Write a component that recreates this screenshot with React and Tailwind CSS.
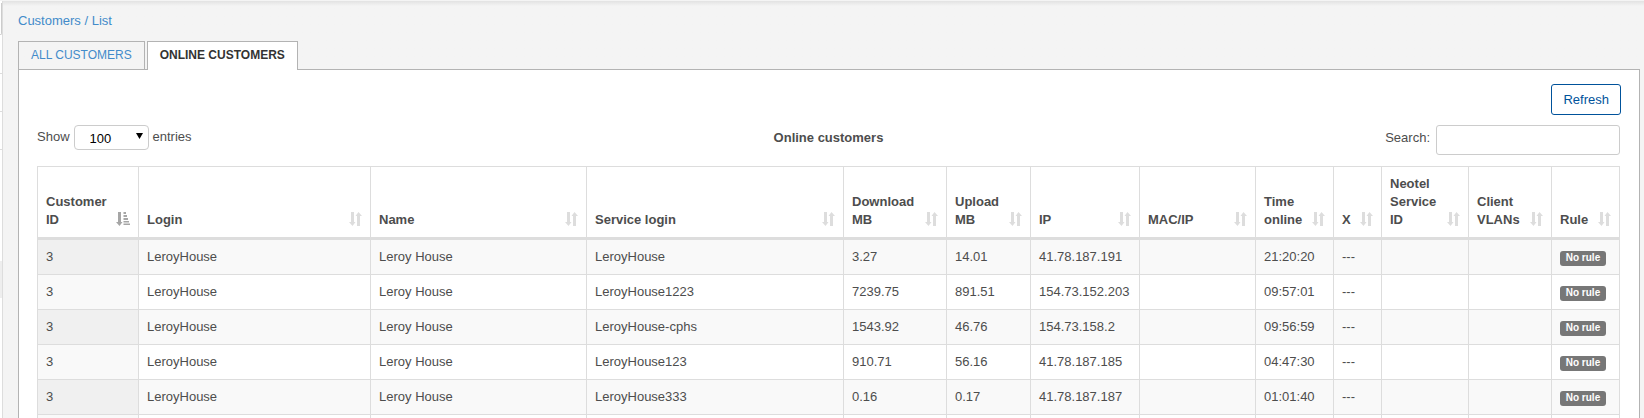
const columns = [
  { label: 'Customer ID', width: 'w-[101px]', sorted: true },
  { label: 'Login', width: 'w-[232px]' },
  { label: 'Name', width: 'w-[216px]' },
  { label: 'Service login', width: 'w-[257px]' },
  { label: 'Download MB', width: 'w-[103px]' },
  { label: 'Upload MB', width: 'w-[84px]' },
  { label: 'IP', width: 'w-[109px]' },
  { label: 'MAC/IP', width: 'w-[116px]' },
  { label: 'Time online', width: 'w-[78px]' },
  { label: 'X', width: 'w-[48px]' },
  { label: 'Neotel Service ID', width: 'w-[87px]' },
  { label: 'Client VLANs', width: 'w-[83px]' },
  { label: 'Rule', width: 'w-[68px]' },
];

const sessions = [
  ['3', 'LeroyHouse', 'Leroy House', 'LeroyHouse', '3.27', '14.01', '41.78.187.191', '', '21:20:20', '---', '', ''],
  ['3', 'LeroyHouse', 'Leroy House', 'LeroyHouse1223', '7239.75', '891.51', '154.73.152.203', '', '09:57:01', '---', '', ''],
  ['3', 'LeroyHouse', 'Leroy House', 'LeroyHouse-cphs', '1543.92', '46.76', '154.73.158.2', '', '09:56:59', '---', '', ''],
  ['3', 'LeroyHouse', 'Leroy House', 'LeroyHouse123', '910.71', '56.16', '41.78.187.185', '', '04:47:30', '---', '', ''],
  ['3', 'LeroyHouse', 'Leroy House', 'LeroyHouse333', '0.16', '0.17', '41.78.187.187', '', '01:01:40', '---', '', ''],
];

function SortIcon() {
  return (
    <svg width="13" height="14" viewBox="0 0 13 14" fill="#dddddd" aria-hidden="true">
      <path d="M2 0h3v10h1.5L3.5 14 0 10h2z" />
      <path d="M8 14h3V4h2L9.5 0 6.5 4H8z" />
    </svg>
  );
}

function SortedIcon() {
  return (
    <svg width="14" height="14" viewBox="0 0 14 14" fill="#a6a6a6" aria-hidden="true">
      <path d="M2 0h3v10h1.5L3.5 14 0 10h2z" />
      <path d="M7.5 0h2.5v2H7.5zM7.5 3H11v2H7.5zM7.5 6H12v2H7.5zM7.5 9H13v1.6H7.5zM7.5 11.4H14V13H7.5z" />
    </svg>
  );
}

function Sidebar() {
  return (
    <aside className="flex w-[3px] shrink-0 flex-col border-r border-[#dddddd] bg-white pt-[2px]">
      <div className="h-[32px] rounded-br-[2px] border-r border-b border-[#cccccc]" />
      <div className="h-[39px] border-b border-[#dddddd]" />
      <div className="h-[38px] border-b border-[#dddddd]" />
      <div className="h-[38px] border-b border-[#dddddd]" />
      <div className="mt-[111px] h-[37px] bg-[#eeeeee]" />
    </aside>
  );
}

function Tabs() {
  return (
    <nav className="relative z-10 -mb-px flex gap-[2px]">
      <a href="#all" className="flex h-[29px] items-center border border-[#b3b3b3] px-3 pb-[2px] text-[12px] text-[#428bca]">
        ALL CUSTOMERS
      </a>
      <a
        href="#online"
        aria-current="page"
        className="flex h-[29px] items-center border border-b-0 border-[#b3b3b3] bg-white px-3 pb-[2px] text-[12px] font-bold text-[#333333]"
      >
        ONLINE CUSTOMERS
      </a>
    </nav>
  );
}

function Toolbar() {
  return (
    <>
      <div className="-mr-px flex justify-end">
        <button className="h-[31px] rounded-[3px] border border-[#00529b] bg-white px-[11px] text-[13px] text-[#00529b]">
          Refresh
        </button>
      </div>
      <div className="mt-[10px] grid grid-cols-3 items-start">
        <div className="flex items-center">
          <label htmlFor="entries" className="pb-[2px]">Show</label>
          <div className="relative mx-1">
            <select
              id="entries"
              defaultValue="100"
              className="block h-[25px] w-[75px] appearance-none rounded-[4px] border border-[#cccccc] bg-white pt-[3px] pl-[15px] text-[13px] text-black"
            >
              <option>100</option>
            </select>
            <svg className="pointer-events-none absolute top-[8px] right-[6px]" width="7" height="6" viewBox="0 0 7 6" aria-hidden="true">
              <path d="M0 0h7L3.5 6z" />
            </svg>
          </div>
          <label htmlFor="entries" className="pb-[2px]">entries</label>
        </div>
        <h1 className="pt-1 text-center font-bold">Online customers</h1>
        <div className="flex items-center justify-end gap-[6px]">
          <label htmlFor="search" className="pb-1">Search:</label>
          <input id="search" type="search" className="h-[30px] w-[184px] rounded-[3px] border border-[#cccccc] bg-white px-2" />
        </div>
      </div>
    </>
  );
}

function CustomerTable() {
  return (
    <table className="mt-[11px] w-full table-fixed border-separate border-spacing-0 border-t border-l border-[#dddddd]">
      <thead>
        <tr>
          {columns.map((c) => (
            <th
              key={c.label}
              aria-sort={c.sorted ? 'ascending' : 'none'}
              className={`${c.width} h-[73px] border-r border-b-3 border-[#dddddd] px-2 py-2 text-left align-bottom font-bold`}
            >
              <div className="flex items-end justify-between">
                <span className="min-w-0">{c.label}</span>
                <span className="shrink-0 pb-[3px]">{c.sorted ? <SortedIcon /> : <SortIcon />}</span>
              </div>
            </th>
          ))}
        </tr>
      </thead>
      <tbody>
        {sessions.map((row, i) => (
          <tr key={row[3]} className="odd:bg-[#f9f9f9]">
            {row.map((value, j) => (
              <td
                key={columns[j].label}
                className={`h-[35px] border-r border-b border-[#dddddd] px-2 whitespace-nowrap ${
                  j === 0 ? (i % 2 === 0 ? 'bg-[#f0f0f0]' : 'bg-[#f9f9f9]') : ''
                }`}
              >
                {value}
              </td>
            ))}
            <td className="border-r border-b border-[#dddddd] px-2">
              <span className="mt-[2px] flex h-[15px] w-[46px] items-center justify-center rounded-[3px] bg-[#777777] text-[10px] font-bold text-white">
                No rule
              </span>
            </td>
          </tr>
        ))}
        <tr>
          {columns.map((c, j) => (
            <td key={c.label} className={`h-[35px] border-r border-b border-[#dddddd] ${j === 0 ? 'bg-[#f9f9f9]' : ''}`} />
          ))}
        </tr>
      </tbody>
    </table>
  );
}

export default function App() {
  return (
    <div className="flex h-screen overflow-hidden border-t border-[#f4f4f4] bg-[#f4f4f4] font-['Liberation_Sans',Arial,sans-serif] text-[13px] leading-[18px] text-[#4d4d4d]">
      <Sidebar />
      <main className="flex min-w-0 flex-1 flex-col bg-linear-to-b from-[#e2e2e2] to-[#f4f4f4] to-[5px] pt-[11px] pr-1 pl-[15px]">
        <div className="mb-[11px] text-[#428bca]">
          <a href="#customers">Customers</a> / <a href="#list">List</a>
        </div>
        <Tabs />
        <section className="flex-1 overflow-hidden border border-b-0 border-[#b3b3b3] bg-white pt-[14px] pr-[19px] pl-[18px]">
          <Toolbar />
          <CustomerTable />
        </section>
      </main>
    </div>
  );
}
